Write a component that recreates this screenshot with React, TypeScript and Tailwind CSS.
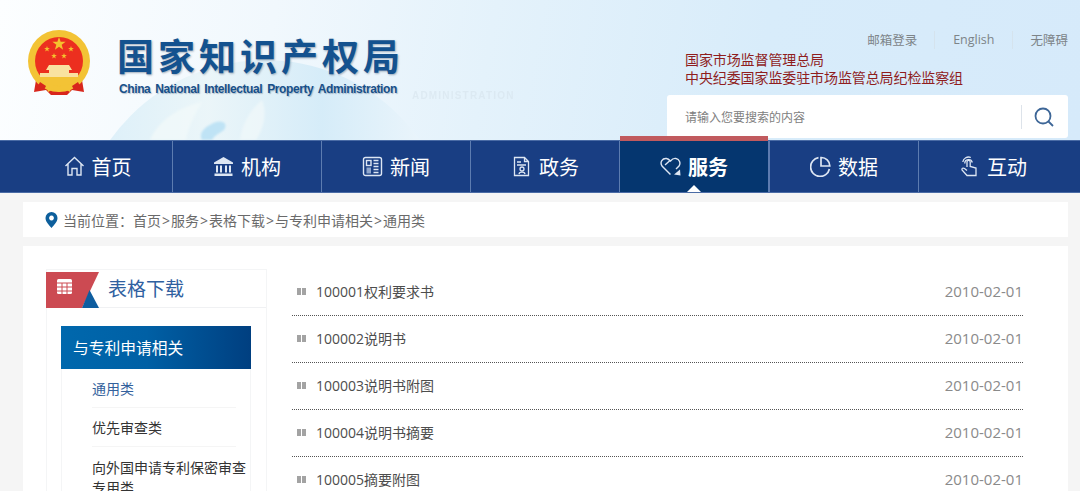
import React from "react";

const CJK = "font-['Noto_Sans_CJK_SC','Noto_Sans',sans-serif]";
const LATIN = "font-['Open_Sans','Noto_Sans_CJK_SC',sans-serif]";

function star(cx: number, cy: number, r: number) {
  const pts: string[] = [];
  for (let i = 0; i < 10; i++) {
    const rad = i % 2 === 0 ? r : r * 0.4;
    const a = (Math.PI / 5) * i - Math.PI / 2;
    pts.push(`${(cx + rad * Math.cos(a)).toFixed(2)},${(cy + rad * Math.sin(a)).toFixed(2)}`);
  }
  return pts.join(" ");
}

function Emblem() {
  return (
    <svg width="64" height="67" viewBox="0 0 64 67" className="shrink-0">
      <path d="M10 44 L7 62 L19 60 L24 65 L40 65 L45 60 L57 62 L54 44 Z" fill="#d8261c" />
      <circle cx="32" cy="31" r="31" fill="#f3c335" />
      <circle cx="32" cy="31" r="24" fill="#ec2f1f" />
      <polygon points={star(32, 14, 7)} fill="#f4c22e" />
      <polygon points={star(20, 19, 3)} fill="#f4c22e" />
      <polygon points={star(44, 19, 3)} fill="#f4c22e" />
      <polygon points={star(27, 26, 3)} fill="#f4c22e" />
      <polygon points={star(37, 26, 3)} fill="#f4c22e" />
      <path d="M22 35 H42 L45 40 H42 V43 H51 V47 H13 V43 H22 V40 H19 Z" fill="#f9e2a0" />
      <path d="M11 47 H53 C50 53 42 56 32 56 C22 56 14 53 11 47 Z" fill="#f3c335" />
      <path d="M19 53 C24 56 28 54 32 57 C36 54 40 56 45 53 L43 62 L38 59 L32 62 L26 59 L21 62 Z" fill="#f3c335" />
      <path d="M13 52 L19 56 L17 60 L9 60 Z M51 52 L45 56 L47 60 L55 60 Z" fill="#d8261c" />
    </svg>
  );
}

function Globe() {
  return (
    <svg aria-hidden className="absolute left-[90px] top-[50px]" width="350" height="90" viewBox="0 0 350 90">
      <defs>
        <linearGradient id="globeFill" x1="0" y1="0" x2="1" y2="0">
          <stop offset="0" stopColor="#d6edf9" />
          <stop offset="0.35" stopColor="#eaf5f8" />
          <stop offset="0.65" stopColor="#d3ebf8" />
          <stop offset="0.9" stopColor="#e9f4fb" />
          <stop offset="1" stopColor="#edf6fc" />
        </linearGradient>
        <filter id="soft">
          <feGaussianBlur stdDeviation="1.2" />
        </filter>
      </defs>
      <circle cx="175" cy="200" r="190" fill="url(#globeFill)" opacity="0.9" />
      <g filter="url(#soft)">
        <path d="M112 90 C108 82 116 76 126 72 C134 70 138 74 134 80 C128 84 124 86 122 90 Z" fill="#bfe3f5" />
        <path d="M60 90 C68 72 86 58 112 52 C104 66 98 78 96 90 Z" fill="#f1f8fa" opacity="0.9" />
        <path d="M150 90 C152 74 160 60 172 50 C178 66 172 80 166 90 Z" fill="#eef7f9" opacity="0.9" />
      </g>
    </svg>
  );
}

const iconCls = "w-[21px] h-[21px] text-[#dde6f3]";

function HomeIcon() {
  return (
    <svg className={iconCls} viewBox="0 0 21 21" fill="none" stroke="currentColor" strokeWidth="1.4">
      <path d="M1.5 10 L10.5 1.5 L19.5 10 M4 8 V19 H8 V12.5 H13 V19 H17 V8" />
    </svg>
  );
}
function BankIcon() {
  return (
    <svg className={iconCls} viewBox="0 0 21 21" fill="currentColor">
      <path d="M10.5 1 L20 6.5 V8 H1 V6.5 Z" />
      <path d="M3 9.5 h2 v7 H3 Z M7 9.5 h2 v7 H7 Z M12 9.5 h2 v7 h-2 Z M16 9.5 h2 v7 h-2 Z" />
      <path d="M1.5 17.5 h18 v2.5 h-18 Z" />
    </svg>
  );
}
function NewsIcon() {
  return (
    <svg className={iconCls} viewBox="0 0 21 21" fill="none" stroke="currentColor" strokeWidth="1.4">
      <rect x="1.5" y="1.5" width="18" height="18" rx="2" />
      <rect x="4.5" y="4.5" width="4.5" height="5" />
      <rect x="4.5" y="11.5" width="4.5" height="6" fill="#8fa6cc" stroke="none" />
      <path d="M11.5 4.5 h5 M11.5 7.5 h5 M11.5 10.5 h5 M11.5 13.5 h5 M11.5 16.5 h5" />
    </svg>
  );
}
function DocIcon() {
  return (
    <svg className={iconCls} viewBox="0 0 21 21" fill="none" stroke="currentColor" strokeWidth="1.3">
      <path d="M3.5 1.5 h10 l4 4 V19.5 H3.5 Z M13.5 1.5 V5.5 h4" />
      <path d="M6 6 h4 M6 9 h9" />
      <circle cx="11" cy="13" r="2" />
      <path d="M8 18 C8.5 15.5 13.5 15.5 14 18" />
    </svg>
  );
}
function HeartIcon() {
  return (
    <svg className={iconCls} viewBox="0 0 21 21" fill="none" stroke="currentColor" strokeWidth="1.4">
      <path d="M10.5 18.5 L2 10 C-0.5 6 2.5 2 6.5 2.5 C8 2.7 9.5 4 10.5 5 C12 3.2 14 2 16 2.5 C19.5 3.2 21 7 19 10 L16 13" />
      <path d="M5 9 L10 4.5" />
      <path d="M14 18.5 L20 13.5 L20.5 19.5 Z" fill="currentColor" stroke="none" />
    </svg>
  );
}
function PieIcon() {
  return (
    <svg className={iconCls} viewBox="0 0 21 21" fill="none" stroke="currentColor" strokeWidth="1.7">
      <path d="M8.5 1.6 A9.5 9.5 0 1 0 19.4 13" />
      <path d="M11 1.5 A8.5 8.5 0 0 1 19.8 10 H11 Z" />
    </svg>
  );
}
function HandIcon() {
  return (
    <svg className={iconCls} viewBox="0 0 21 21" fill="none" stroke="currentColor" strokeWidth="1.3">
      <path d="M8 11 V6 a1.6 1.6 0 0 1 3.2 0 V10.5 L17 12 V19.5 H8 L3 14 C2.5 12.5 4 11.5 5.5 12.5 L8 14.5" />
      <path d="M5.8 7.5 a3.8 3.8 0 0 1 7.5 -1 M3.8 6 a5.8 5.8 0 0 1 8 -4.5" />
    </svg>
  );
}

const navItems: { label: string; icon: React.ReactNode; active?: boolean }[] = [
  { label: "首页", icon: <HomeIcon /> },
  { label: "机构", icon: <BankIcon /> },
  { label: "新闻", icon: <NewsIcon /> },
  { label: "政务", icon: <DocIcon /> },
  { label: "服务", icon: <HeartIcon />, active: true },
  { label: "数据", icon: <PieIcon /> },
  { label: "互动", icon: <HandIcon /> },
];

const rows = [
  "100001权利要求书",
  "100002说明书",
  "100003说明书附图",
  "100004说明书摘要",
  "100005摘要附图",
];

const crumbs = ["首页", "服务", "表格下载", "与专利申请相关", "通用类"];

export default function App() {
  return (
    <div className={`w-[1080px] h-[491px] overflow-hidden bg-[#f5f5f5] ${CJK}`}>
      {/* header */}
      <header className="relative h-[140px] overflow-hidden bg-[linear-gradient(100deg,#fcfeff_0%,#f1f8fd_25%,#e4f2fb_45%,#d8ecfa_70%,#d6eafa_100%)]">
        <Globe />
        <span className="absolute left-[412px] top-[88px] font-['Liberation_Sans',sans-serif] text-[10px] font-bold tracking-[1.2px] text-[#d4e1ea] opacity-50">
          ADMINISTRATION
        </span>
        <div className="relative flex h-full justify-between">
          <div className="flex items-start pl-[27px] pt-[30px]">
            <Emblem />
            <div className="ml-[27px] mt-[3px] flex flex-col">
              <h1 className="-ml-px text-[37px] leading-[44px] font-bold tracking-[4px] text-[#14528f] whitespace-nowrap [text-shadow:1px_1px_2px_rgba(40,60,90,0.4)]">
                国家知识产权局
              </h1>
              <p className="mt-[4px] ml-[1px] font-['Liberation_Sans',sans-serif] text-[12px] leading-[16px] font-bold text-[#17508a] whitespace-nowrap tracking-[-0.4px] [word-spacing:2px] [text-shadow:1px_1px_1px_rgba(40,60,90,0.3)]">
                China National Intellectual Property Administration
              </p>
            </div>
          </div>
          <div className="flex w-[401px] mr-[12px] flex-col items-stretch pt-[31px]">
            <div className="flex justify-end text-[12.5px] leading-[18px] text-[#7d8488]">
              <span className="pr-[17px]">邮箱登录</span>
              <span className="px-[18px] border-l border-[#d5e3ed] font-['Open_Sans',sans-serif]">English</span>
              <span className="pl-[17px] border-l border-[#d5e3ed]">无障碍</span>
            </div>
            <div className="mt-[1px] ml-[18px] text-[14px] leading-[18px] tracking-[-0.1px] text-[#8f1d1d]">
              <p>国家市场监督管理总局</p>
              <p>中央纪委国家监委驻市场监管总局纪检监察组</p>
            </div>
            <div className="mt-[9px] flex h-[43px] items-center rounded-[3px] bg-white pl-[18px] pr-[14px]">
              <span className="flex-1 text-[12px] text-[#808080]">请输入您要搜索的内容</span>
              <span className="h-[24px] w-px bg-[#dde3ea]" />
              <svg className="ml-[12px]" width="20" height="20" viewBox="0 0 20 20" fill="none" stroke="#3d6697" strokeWidth="1.8">
                <circle cx="9" cy="9" r="7.5" />
                <path d="M14.5 14.5 L19 19" />
              </svg>
            </div>
          </div>
        </div>
      </header>

      {/* nav */}
      <nav className="flex h-[53px] bg-[#193e83] border-t border-b border-[#4a6ba5]">
        {navItems.map((item, i) => (
          <a
            key={item.label}
            className={`relative flex flex-none items-center justify-center gap-[6px] text-[20px] text-white ${
              i === 0 ? "w-[172px] pl-[23px]" : "border-l border-[#5d7cb0]"
            } ${i > 0 && !item.active ? "w-[149px]" : ""} ${
              item.active ? "w-[150px] bg-[#05366f] font-bold border-r" : ""
            }`}
          >
            {item.active && (
              <>
                <span className="absolute left-0 right-0 -top-[5px] h-[5px] bg-[#c15a5e]" />
                <span className="absolute bottom-0 left-1/2 -ml-[7px] h-0 w-0 border-x-[7px] border-b-[7px] border-x-transparent border-b-white" />
              </>
            )}
            {item.icon}
            <span className="ml-[1px]">{item.label}</span>
          </a>
        ))}
      </nav>

      {/* breadcrumb */}
      <div className="ml-[23px] mt-[9px] flex h-[35px] w-[1045px] items-center bg-white pl-[22px] pt-[1px] text-[14px] text-[#6a6a6a]">
        <svg width="13" height="16" viewBox="0 0 13 16" className="mr-[5px]">
          <path fillRule="evenodd" d="M6.5 0 A6 6 0 0 1 12.5 6 C12.5 10 8.5 13.5 6.5 16 C4.5 13.5 .5 10 .5 6 A6 6 0 0 1 6.5 0 Z M6.5 3.6 a2.4 2.4 0 1 0 .01 0 Z" fill="#0d5f9c" />
        </svg>
        <span>当前位置：</span>
        {crumbs.map((c, i) => (
          <React.Fragment key={c}>
            {i > 0 && <span className={`mx-[1px] ${LATIN}`}>&gt;</span>}
            <span>{c}</span>
          </React.Fragment>
        ))}
      </div>

      {/* content */}
      <main className="ml-[23px] mt-[9px] flex h-[300px] w-[1045px] bg-white pl-[23px] pt-[23px]">
        <aside className="w-[221px] shrink-0 border-x border-t border-[#f4f5f6]">
          <div className="flex h-[38px] items-center border-b border-[#f0f1f3]">
            <svg width="53" height="36" viewBox="0 0 53 36" className="-ml-px mt-[2px] shrink-0">
              <path d="M0 0 H53 L36 36 H0 Z" fill="#cc4a52" />
              <path d="M43.5 18 L53 36 H36 Z" fill="#0e5d9f" />
              <rect x="11" y="7" width="15" height="15" rx="1.5" fill="#fff" />
              <path d="M11 11 H26 M11 15 H26 M11 19 H26 M16 11 V22 M21 11 V22" stroke="#cc4a52" strokeWidth="1" />
            </svg>
            <span className="ml-[9px] text-[19px] text-[#2f609f]">表格下载</span>
          </div>
          <div className="ml-[14px] mr-[15px] mt-[18px] border-x border-[#f4f5f6]">
            <div className="-mx-px flex h-[43px] items-center bg-[linear-gradient(90deg,#0068ad_0%,#0060a5_45%,#003f80_100%)] pl-[12px] text-[15.75px] text-white">
              与专利申请相关
            </div>
            <ul className="pl-[30px] pr-[4px] text-[14px] text-[#333]">
              <li className="mr-[10px] flex h-[39px] items-center border-b border-[#f5f5f5] text-[#33619c]">通用类</li>
              <li className="mr-[10px] flex h-[39px] items-center border-b border-[#f5f5f5]">优先审查类</li>
              <li className="pt-[10px] leading-[20px]">向外国申请专利保密审查专用类</li>
            </ul>
          </div>
        </aside>

        <section className="ml-[25px] w-[731px] shrink-0">
          {rows.map((r) => (
            <div key={r} className="flex h-[47px] items-center justify-between border-b border-dotted border-[#555] pb-[2px]">
              <div className="flex items-center">
                <span className="ml-[5px] flex gap-px">
                  <i className="block h-[7px] w-[4px] bg-[#a3a3a3]" />
                  <i className="block h-[7px] w-[4px] bg-[#a3a3a3]" />
                </span>
                <span className={`ml-[10px] text-[14px] text-[#4d4d4d] ${LATIN}`}>{r}</span>
              </div>
              <span className={`text-[15px] text-[#8a8a8a] ${LATIN}`}>2010-02-01</span>
            </div>
          ))}
        </section>
      </main>
    </div>
  );
}
